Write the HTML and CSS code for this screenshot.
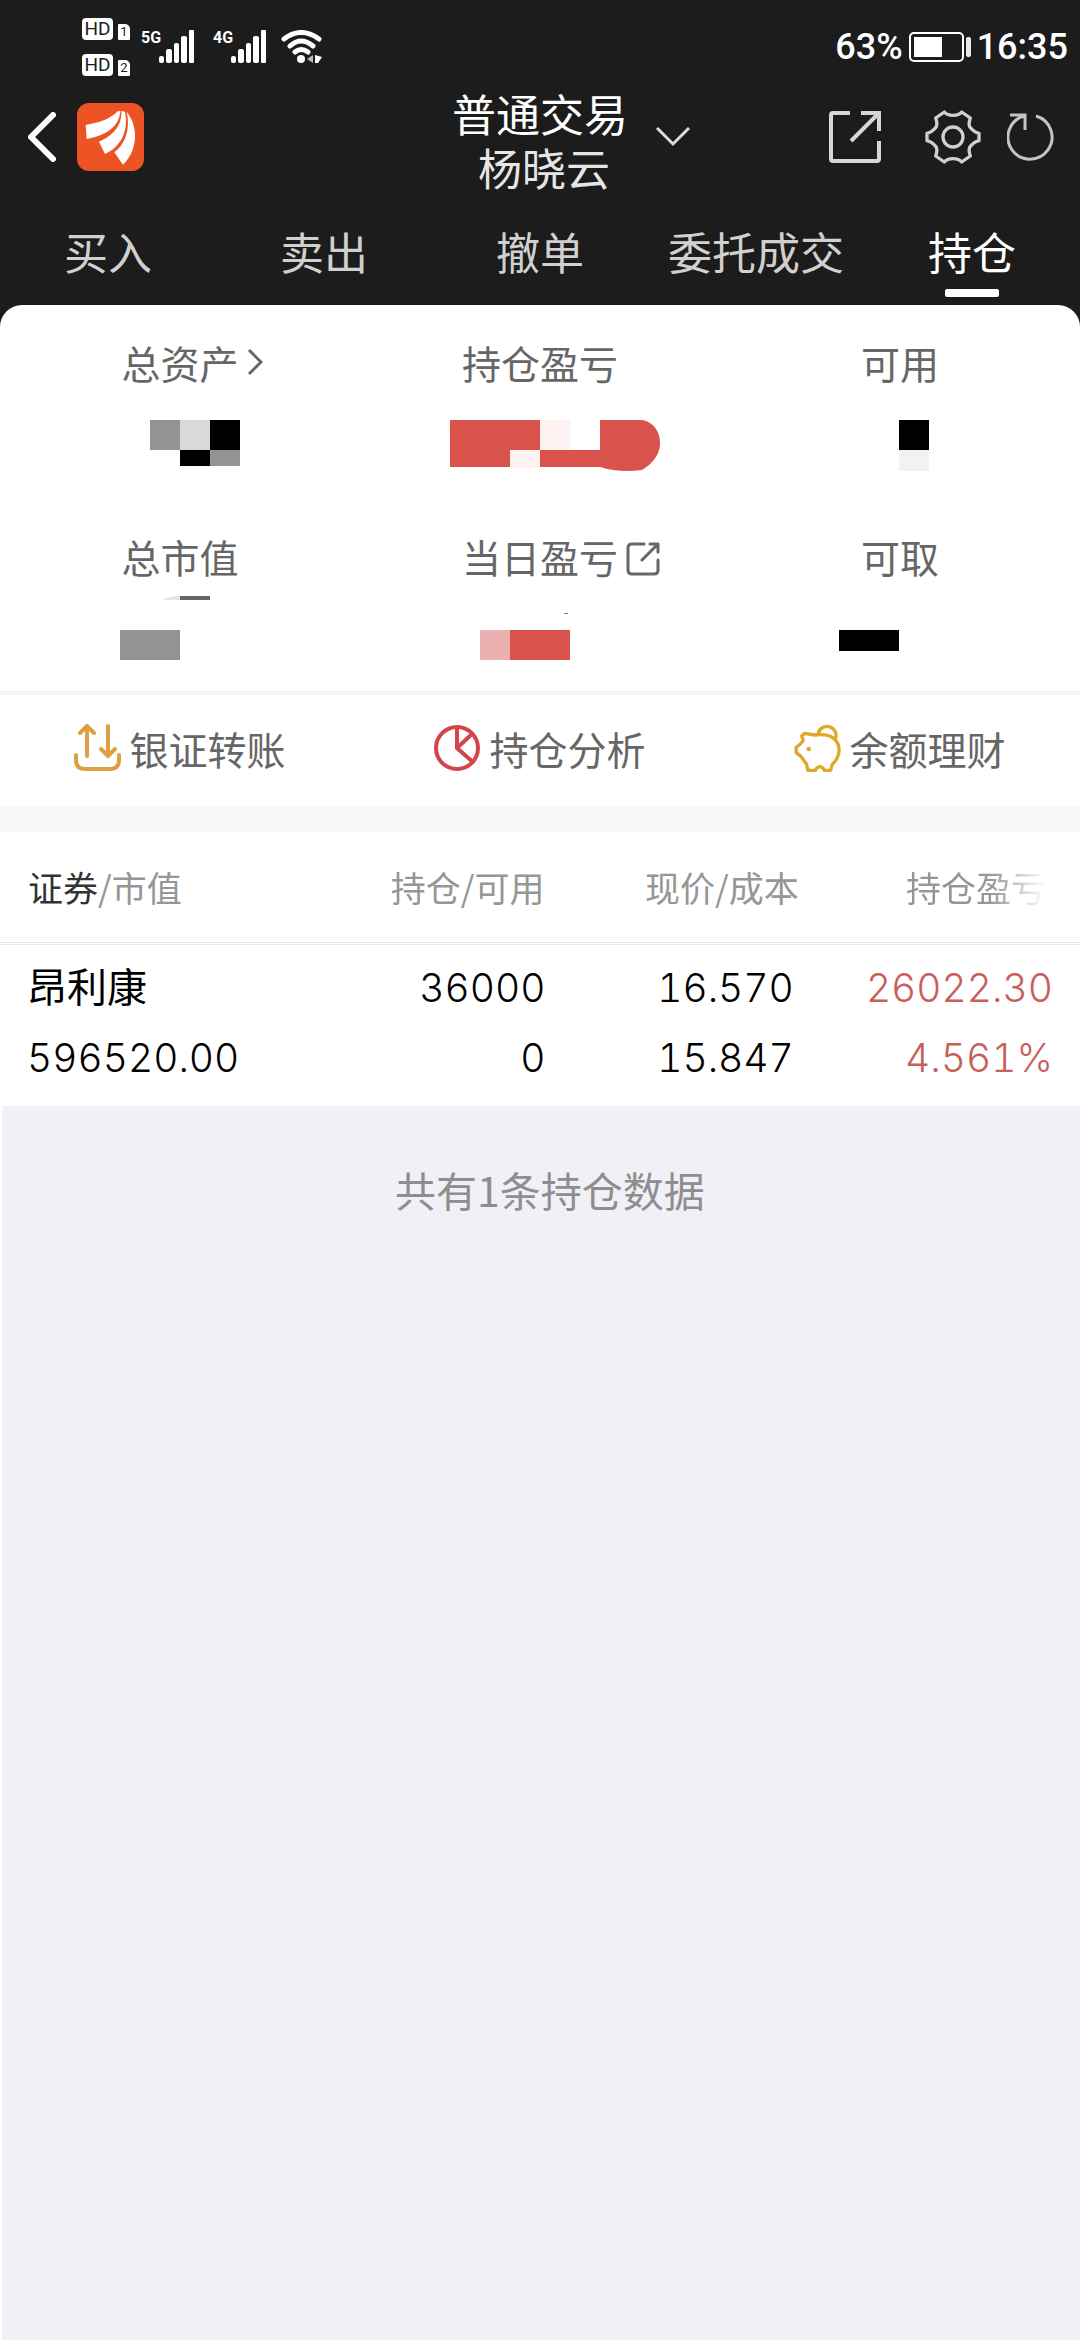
FILE: index.html
```html
<!DOCTYPE html>
<html lang="zh-CN">
<head>
  <meta charset="UTF-8">
  <meta name="viewport" content="width=device-width, initial-scale=1">
  <title>普通交易</title>
  <link rel="stylesheet" href="styles.css">
</head>
<body>
<div class="top">
  <div class="status">
    <div class="hd-list">
      <div class="hd"><span class="hd-box">HD</span><span class="sim">1</span></div>
      <div class="hd"><span class="hd-box">HD</span><span class="sim">2</span></div>
    </div>
    <div class="signal">
      <span class="net">5G</span>
      <svg width="36" height="34" viewBox="0 0 36 34" fill="#fff">
        <rect x="0" y="26" width="5" height="7" rx="2"/><rect x="7" y="19" width="6" height="14" rx="2"/><rect x="15" y="13" width="5" height="20" rx="2"/><rect x="22" y="6" width="6" height="27" rx="2"/><rect x="30" y="0" width="5" height="33" rx="1"/>
      </svg>
    </div>
    <div class="signal">
      <span class="net">4G</span>
      <svg width="36" height="34" viewBox="0 0 36 34" fill="#fff">
        <rect x="0" y="26" width="5" height="7" rx="2"/><rect x="7" y="19" width="6" height="14" rx="2"/><rect x="15" y="13" width="5" height="20" rx="2"/><rect x="22" y="6" width="6" height="27" rx="2"/><rect x="30" y="0" width="5" height="33" rx="1"/>
      </svg>
    </div>
    <svg class="wifi" width="42" height="34" viewBox="0 0 42 34" fill="none" stroke="#fff" stroke-width="5" stroke-linecap="round">
      <path d="M3 9Q20 -4 38 9M9 16Q20 6 32 16M14 22Q20 17 27 22"/>
      <circle cx="20" cy="29" r="4" fill="#fff" stroke="none"/>
      <path d="M32 25v8l-6-4z" fill="#bbb" stroke="none"/>
      <path d="M34 25l7 2-4 6h-3z" fill="#fff" stroke="none"/>
    </svg>
    <span class="battery-text">63%</span>
    <svg width="62" height="30" viewBox="0 0 62 30">
      <rect x="1" y="1" width="53" height="28" rx="4" fill="none" stroke="#fff" stroke-width="2"/>
      <rect x="5" y="5" width="28" height="20" fill="#fff"/>
      <rect x="57" y="5" width="5" height="20" rx="2" fill="#e8e8e8"/>
    </svg>
    <span class="clock">16:35</span>
  </div>

  <header class="header">
    <div class="header-left">
      <button class="icon-btn" aria-label="返回">
        <svg width="28" height="50" viewBox="0 0 28 50" fill="none" stroke="#fff" stroke-width="6" stroke-linecap="round" stroke-linejoin="round"><path d="M25 3L3 25l22 22"/></svg>
      </button>
      <svg width="67" height="68" viewBox="0 0 201 204">
        <rect width="201" height="204" rx="36" fill="#ee5326"/>
        <g fill="#fff">
          <path d="M122 25C98 50 62 60 26 66l3 42c56-10 98-36 101-84z"/>
          <path d="M133 24c2 46-26 74-67 92l18 37c46-22 72-66 60-127z"/>
          <path d="M149 26c12 54-4 96-37 122l26 37c42-40 50-110 11-159z"/>
        </g>
      </svg>
    </div>
    <h1 class="title">普通交易<span class="user">杨晓云</span></h1>
    <div class="header-right">
      <button class="icon-btn account" aria-label="切换账户">
        <svg width="34" height="20" viewBox="0 0 34 20" fill="none" stroke="#ddd" stroke-width="3"><path d="M1 1l16 16L33 1"/></svg>
      </button>
      <button class="icon-btn share" aria-label="分享">
        <svg width="52" height="52" viewBox="0 0 52 52" fill="none" stroke="#d6d6d6" stroke-width="4"><path d="M21 2H4Q2 2 2 4v44q0 2 2 2h44q2 0 2-2V30M32 2h18v18M49 3L22 30"/></svg>
      </button>
      <button class="icon-btn settings" aria-label="设置">
        <svg width="56" height="54" viewBox="0 0 168 162" fill="none" stroke="#cfcfcf" stroke-width="10" stroke-linejoin="round">
          <path d="M58 6Q66 16 84 16T110 6L136 24Q130 40 134 50 146 66 162 70V92Q146 96 134 112 130 122 136 138L110 156Q102 146 84 146T58 156L32 138Q38 122 34 112 22 96 6 92V70Q22 66 34 50 38 40 32 24Z"/>
          <circle cx="84" cy="81" r="30"/>
        </svg>
      </button>
      <button class="icon-btn refresh" aria-label="刷新">
        <svg width="48" height="48" viewBox="0 0 48 48" fill="none" stroke="#c4c4c4" stroke-width="3"><path d="M29 3A22 22 0 1 1 17 3M3 2h15v15"/></svg>
      </button>
    </div>
  </header>

  <nav class="tabs">
    <a class="tab" href="#buy">买入</a>
    <a class="tab" href="#sell">卖出</a>
    <a class="tab" href="#cancel">撤单</a>
    <a class="tab" href="#orders">委托成交</a>
    <a class="tab active" href="#holdings">持仓</a>
  </nav>

  <section class="summary">
    <div class="cell">
      <a class="label" href="#assets">总资产
        <svg class="mark" width="16" height="28" viewBox="0 0 16 28" fill="none" stroke="#666" stroke-width="3"><path d="M2 2l12 12L2 26"/></svg>
      </a>
      <svg width="240" height="140" viewBox="-60 -2 240 140">
        <path d="M30 28h30v30H30z" fill="#939393"/><path d="M60 28h30v30H60z" fill="#d9d9d9"/><path d="M90 28h30v30H90z"/><path d="M60 58h30v16H60z"/><path d="M90 58h30v16H90z" fill="#939393"/>
      </svg>
    </div>
    <div class="cell">
      <span class="label">持仓盈亏</span>
      <svg width="240" height="140" viewBox="0 -2 240 140">
        <path d="M30 28h90v30h60V28h42c12 2 18 12 18 23 0 12-8 21-18 27-14 2-30 1-42-3H30z" fill="#d9534c"/>
        <path d="M90 58h30v18H90zM120 28h30v30h-30z" fill="#fff2f2"/>
      </svg>
    </div>
    <div class="cell">
      <span class="label">可用</span>
      <svg width="240" height="140" viewBox="0 -2 240 140">
        <path d="M119 28h30v30h-30z"/><path d="M119 58h30v21h-30z" fill="#f2f2f2"/>
      </svg>
    </div>
    <div class="cell">
      <span class="label">总市值</span>
      <svg width="240" height="107" viewBox="-60 -2 240 107">
        <path d="M42 14q8-4 18-4v4z" fill="#e4e4e4"/><path d="M60 10h30v4H60z" fill="#666"/><path d="M0 44h60v30H0z" fill="#939393"/>
      </svg>
    </div>
    <div class="cell">
      <a class="label" href="#today">当日盈亏
        <svg class="mark" width="34" height="34" viewBox="0 0 34 34" fill="none" stroke="#666" stroke-width="3" stroke-linecap="round" stroke-linejoin="round"><path d="M18 2H6Q2 2 2 6v22q0 4 4 4h22q4 0 4-4V18M24 2h8v8M31 3L16 18"/></svg>
      </a>
      <svg width="240" height="107" viewBox="0 -2 240 107">
        <path d="M60 44h30v30H60z" fill="#ebb0b0"/><path d="M90 44h60v30H90zM144 27h4v1h-4z" fill="#d9534c"/>
      </svg>
    </div>
    <div class="cell">
      <span class="label">可取</span>
      <svg width="240" height="107" viewBox="0 -2 240 107"><path d="M59 44h60v21H59z"/></svg>
    </div>
  </section>
</div>

<nav class="actions">
  <a class="action" href="#transfer">
    <svg width="47" height="48" viewBox="0 0 47 48" fill="none" stroke="#dea043" stroke-width="4" stroke-linecap="round" stroke-linejoin="round"><path d="M13 32V3M6 9l7-7 7 7M34 2v29M27 25l7 7 7-7M2 31v5q0 9 9 9h25q9 0 9-9v-5"/></svg>
    银证转账
  </a>
  <a class="action" href="#analysis">
    <svg width="47" height="48" viewBox="0 0 47 48" fill="none" stroke="#d3454b" stroke-width="4"><circle cx="23" cy="24" r="21"/><path d="M23 2v22l17 15M23 24L39 9"/></svg>
    持仓分析
  </a>
  <a class="action" href="#wealth">
    <svg width="47" height="48" viewBox="0 0 138 144" fill="none" stroke="#e0a828" stroke-width="10" stroke-linejoin="round">
      <path d="M30 28L62 33Q84 30 106 36 134 50 134 78 132 105 114 120L108 139H90Q84 128 76 128T62 139H40L36 120Q26 108 20 98L5 86V70Q18 62 26 50L22 36Z"/>
      <path d="M71 30A27 27 0 1 1 122 46"/>
      <circle cx="43" cy="75" r="7" fill="#e0a828" stroke="none"/>
    </svg>
    余额理财
  </a>
</nav>

<table class="holdings">
  <thead>
  <tr>
    <th class="col-name"><span class="sorted">证券</span>/市值</th>
    <th class="col-amount">持仓/可用</th>
    <th class="col-price">现价/成本</th>
    <th class="col-profit"><span class="fade">持仓盈亏</span></th>
  </tr>
  </thead>
  <tbody>
  <tr>
    <td><div class="stock">昂利康</div><div>596520.00</div></td>
    <td><div>36000</div><div>0</div></td>
    <td><div>16.570</div><div>15.847</div></td>
    <td class="up"><div>26022.30</div><div>4.561%</div></td>
  </tr>
  </tbody>
</table>

<footer class="total">共有1条持仓数据</footer>
</body>
</html>
```
FILE: styles.css
```css
* {
  box-sizing: border-box;
}

body {
  display: flex;
  flex-direction: column;
  min-height: 100vh;
  margin: 0;
  background: #fff;
  color: #000;
  font-family: "Noto Sans CJK SC", sans-serif;
}

a {
  color: inherit;
  text-decoration: none;
}

svg {
  display: block;
  flex: none;
}

.top {
  background: #1c1c1c;
}

/* phone status bar */
.status {
  display: flex;
  align-items: center;
  height: 86px;
  padding: 8px 12px 0 82px;
  color: #fff;
  font-family: Roboto, sans-serif;
  font-size: 36px;
  font-weight: 500;
}

.hd-list {
  display: flex;
  flex-direction: column;
  gap: 14px;
  margin-right: 11px;
}

.hd {
  display: flex;
  align-items: flex-end;
  gap: 5px;
}

.hd-box,
.sim {
  background: #fff;
  color: #1c1c1c;
  text-align: center;
  font-weight: 400;
}

.hd-box {
  width: 31px;
  border-radius: 4px;
  font-size: 19px;
  line-height: 22px;
}

.sim {
  width: 12px;
  border-radius: 1px 5px 1px 1px;
  font-size: 13px;
  line-height: 16px;
}

.signal {
  display: flex;
  align-items: flex-start;
  margin-right: 18px;
}

.net {
  width: 18px;
  font-size: 16px;
  font-weight: 700;
  line-height: 16px;
}

.wifi {
  margin-left: -4px;
}

.battery-text {
  margin: 0 6px 0 auto;
}

.clock {
  margin-left: 6px;
}

.header {
  display: grid;
  grid-template-columns: 1fr auto 1fr;
  align-items: center;
}

.header-left,
.header-right {
  display: flex;
  align-items: center;
  padding: 0 25px 0 28px;
  margin-bottom: 12px;
}

.header-left {
  gap: 21px;
}

.icon-btn {
  padding: 0;
  border: 0;
  background: none;
}

.title {
  margin: 0;
  padding-bottom: 6px;
  color: #fff;
  font-size: 44px;
  font-weight: 400;
  line-height: 54px;
  text-align: center;
}

.user {
  display: block;
  padding-left: 8px;
  color: #e6e6e6;
}

.share {
  margin-left: auto;
}

.settings {
  margin: 0 26px 0 44px;
}

.tabs {
  display: grid;
  grid-template-columns: repeat(5, 1fr);
  padding: 21px 0 8px;
}

.tab {
  height: 76px;
  color: #d0d0d0;
  font-size: 44px;
  line-height: 60px;
  text-align: center;
}

.tab.active {
  color: #fff;
}

.tab.active::after {
  content: "";
  display: block;
  width: 54px;
  height: 8px;
  margin: 8px auto 0;
  border-radius: 2px;
  background: #fff;
}

.summary {
  display: grid;
  grid-template-columns: repeat(3, 1fr);
  padding-top: 29px;
  border-radius: 22px 22px 0 0;
  background: #fff;
}

.cell {
  display: flex;
  flex-direction: column;
  align-items: center;
}

.label {
  position: relative;
  height: 56px;
  color: #666;
  font-size: 39px;
  line-height: 56px;
}

.cell:nth-child(n + 4) {
  margin-top: -2px;
}

/* small icon hangs to the right, the text itself stays centred */
.mark {
  position: absolute;
  top: 14px;
  left: 100%;
  margin-left: 8px;
}

.actions {
  display: grid;
  grid-template-columns: repeat(3, 1fr);
  border-top: 3px double #eee;
  border-bottom: 26px solid #f7f7f7;
}

.action {
  display: flex;
  align-items: center;
  justify-content: center;
  gap: 8px;
  height: 112px;
  padding-bottom: 4px;
  color: #666;
  font-size: 39px;
}

.holdings {
  width: 100%;
  border-spacing: 0 4px;
  table-layout: fixed;
}

.holdings th {
  padding: 0 28px;
  height: 102px;
  border-bottom: 1px solid #f4f4f4;
  color: #969696;
  font-size: 35px;
  font-weight: 400;
  text-align: right;
  white-space: nowrap;
}

.col-amount {
  width: 25%;
}

.col-price {
  width: 23%;
}

.col-profit {
  width: 24%;
}

.sorted {
  color: #333;
}

.holdings .col-price {
  padding-right: 22px;
}

.holdings .col-profit {
  padding-right: 34px;
}

.fade {
  background: linear-gradient(to right, #969696 60%, #fff);
  -webkit-background-clip: text;
  background-clip: text;
  color: transparent;
}

.holdings td {
  padding: 8px 27px 9px;
  border-top: 3px double #e8e8ee;
  font-family: Inter, "Noto Sans CJK SC", sans-serif;
  font-size: 39px;
  font-weight: 300;
  font-variant-numeric: tabular-nums;
  line-height: 70px;
  text-align: right;
}

.holdings th:first-child,
.holdings td:first-child {
  text-align: left;
}

.holdings .stock {
  font-size: 40px;
  font-weight: 400;
}

.holdings .up {
  color: #c75f5b;
}

.total {
  flex: 1;
  padding: 53px 0 0 18px;
  border-left: 2px solid #fff;
  background: #f1f0f6;
  color: #8e8e8e;
  font-size: 41px;
  line-height: 60px;
  text-align: center;
}
```
